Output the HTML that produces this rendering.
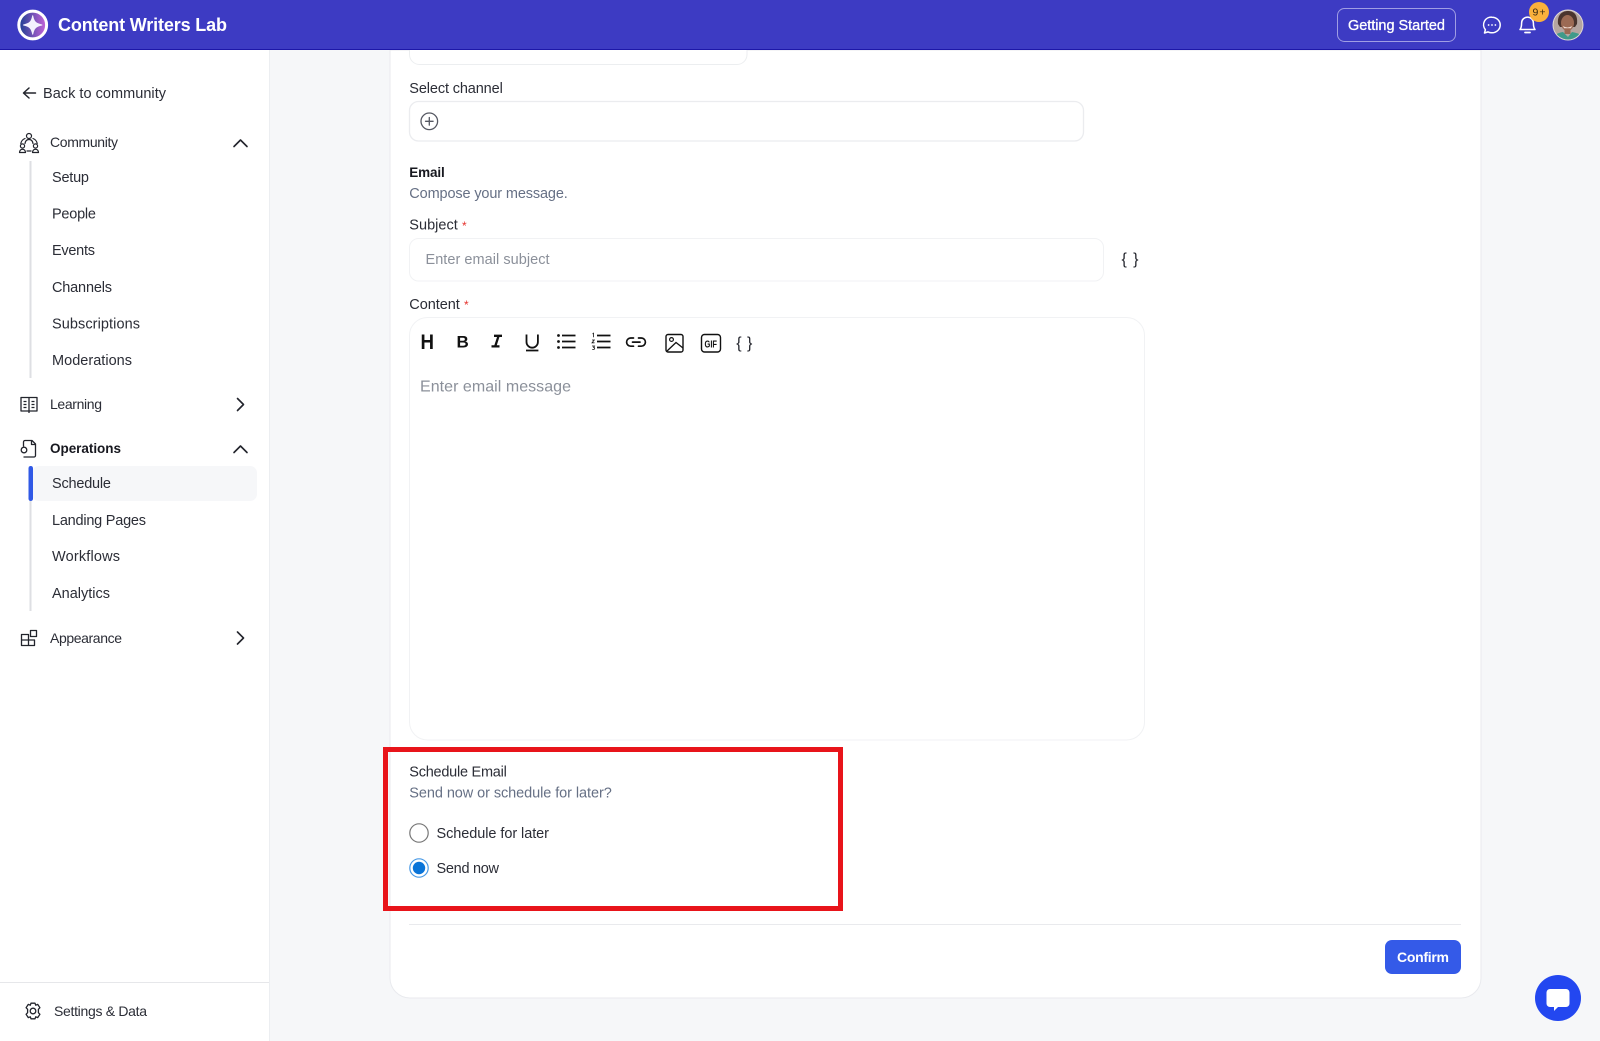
<!DOCTYPE html>
<html lang="en"><head><meta charset="utf-8"><title>Content Writers Lab</title>
<style>
html,body{margin:0;padding:0;width:1600px;height:1041px;overflow:hidden;background:#f6f7f9}
svg{display:block;position:absolute;left:0;top:0}
text{font-family:"Liberation Sans",sans-serif;font-size:14.5px;fill:#2b2d36}
.m{font-weight:700}
.g{fill:#667085}
.p{fill:#8b909a}
.i{fill:none;stroke:#22242c;stroke-width:1.4;stroke-linecap:round;stroke-linejoin:round}
.c{fill:none;stroke:#22242c;stroke-width:1.6;stroke-linecap:round;stroke-linejoin:round}
</style></head><body>
<svg width="1600" height="1041" viewBox="0 0 1600 1041" xmlns="http://www.w3.org/2000/svg">
<defs>
<linearGradient id="lg" x1="0" x2="1" y1="0" y2="0"><stop offset="0" stop-color="#1b3f92"/><stop offset="1" stop-color="#c864da"/></linearGradient>
<clipPath id="av"><circle cx="1568" cy="25" r="14.5"/></clipPath>
</defs>
<!-- sidebar -->
<rect x="0" y="50" width="269.5" height="991" fill="#fff"/>
<rect x="269" y="50" width="1" height="991" fill="#eceef1"/>
<rect x="0" y="982" width="269" height="1" fill="#e6e7ea"/>
<!-- card -->
<path d="M390 50V978a20 20 0 0 0 20 20H1461a20 20 0 0 0 20-20V50Z" fill="#fff" stroke="#e9eaee"/>
<!-- header -->
<rect x="0" y="0" width="1600" height="49.5" fill="#3d3bc3"/>
<rect x="0" y="49" width="1600" height="1" fill="#1d17a8"/>
<circle cx="32.7" cy="25" r="13.900" fill="url(#lg)" stroke="#fff" stroke-width="3"/>
<path d="M32.700 15.800C33.900 21.800 35.700 23.700 41.900 25C35.700 26.300 33.900 28.200 32.700 34.200C31.500 28.200 29.700 26.300 23.500 25C29.700 23.700 31.500 21.800 32.700 15.800Z" fill="#f3f0fd" stroke="#f3f0fd" stroke-width="1" stroke-linejoin="round"/>
<text x="58" y="31" textLength="169" lengthAdjust="spacing" class="m" style="font-size:18px;fill:#fff">Content Writers Lab</text>
<rect x="1337.5" y="8.5" width="118" height="33" rx="7" fill="none" stroke="#a09ee4"/>
<text x="1348" y="30" textLength="97" lengthAdjust="spacing" style="fill:#fff;font-size:14.500px;stroke:#fff;stroke-width:.3">Getting Started</text>
<path d="M1492 17.2a8 7.6 0 0 1 0 15.6c-1.4 0-2.7-.3-3.9-.9l-3.6 1.1.9-3.3a7.6 7.6 0 0 1 6.6-12.5Z" fill="none" stroke="#fff" stroke-width="1.5" stroke-linejoin="round"/>
<circle cx="1488.6" cy="25" r=".9" fill="#fff"/><circle cx="1492" cy="25" r=".9" fill="#fff"/><circle cx="1495.4" cy="25" r=".9" fill="#fff"/>
<path d="M1520 29.5c1.4-1.6 1.6-3.2 1.6-6.5a5.9 5.9 0 0 1 11.8 0c0 3.3.2 4.9 1.6 6.5Z" fill="none" stroke="#fff" stroke-width="1.5" stroke-linejoin="round"/>
<path d="M1525 32.5h5" stroke="#fff" stroke-width="1.8" stroke-linecap="round"/>
<circle cx="1539" cy="12" r="10" fill="#fbb13c"/>
<text x="1532.500" y="15.5" textLength="13" lengthAdjust="spacing" style="font-size:10.500px;fill:#3a2a10">9+</text>
<circle cx="1568" cy="25" r="15.5" fill="#e0d8d6"/>
<g clip-path="url(#av)">
<rect x="1552" y="9" width="32" height="32" fill="#b5a5a0"/>
<path d="M1558 24c-1-9 4-13 10-13s10 4 9 13l-2 3h-15Z" fill="#4a342e"/>
<ellipse cx="1567.500" cy="23" rx="6.500" ry="8" fill="#9c6a54"/>
<path d="M1563 26q4.500 3 9 0l-1 2.300h-7Z" fill="#f1dcd2"/>
<rect x="1564.500" y="29" width="6" height="5" fill="#9c6a54"/>
<path d="M1552 42V37q5-4 11-5l5 5 4-5q7 1 12 5v5Z" fill="#3f9a8a"/>
</g>
<!-- sidebar items -->
<path class="i" d="M29 88l-5.500 5 5.500 5M24 93h11.500" style="stroke-width:1.500"/>
<text x="43" y="98" textLength="123" lengthAdjust="spacing">Back to community</text>
<g class="i" style="stroke-width:1.200">
<circle cx="29" cy="136" r="2.500"/><path d="M25 143.500c.4-2.600 2-4 4-4s3.600 1.400 4 4"/>
<circle cx="22.500" cy="146" r="2.100"/><path d="M19.500 152.500c.2-2 1.300-3.200 3-3.200s2.800 1.200 3 3.200z"/>
<circle cx="35.500" cy="146" r="2.100"/><path d="M32.500 152.500c.2-2 1.300-3.200 3-3.200s2.800 1.200 3 3.200z"/>
<path d="M25 138.500c-2.500 1-3.800 2.800-4.200 5M33 138.500c2.500 1 3.800 2.800 4.200 5M27 151h4"/>
</g>
<text x="50" y="147" textLength="68" lengthAdjust="spacing" style="font-size:14px">Community</text>
<path class="c" d="M234 146.500l6.500-6.500 6.500 6.500"/>
<rect x="29.500" y="161" width="2" height="217" fill="#dedfe3"/>
<text x="52" y="182" textLength="37" lengthAdjust="spacing">Setup</text>
<text x="52" y="218.500" textLength="44" lengthAdjust="spacing">People</text>
<text x="52" y="255" textLength="43" lengthAdjust="spacing">Events</text>
<text x="52" y="292" textLength="60" lengthAdjust="spacing">Channels</text>
<text x="52" y="328.500" textLength="88" lengthAdjust="spacing">Subscriptions</text>
<text x="52" y="365" textLength="80" lengthAdjust="spacing">Moderations</text>
<path class="i" style="stroke-width:1.300;stroke-linecap:butt" d="M21 397.500h16v13.500h-16zM29 397.500v15.500M23.500 401.500h3M23.500 404.500h3M23.500 407.500h3M31.500 401.500h3M31.500 404.500h3M31.500 407.500h3"/>
<text x="50" y="409" textLength="52" lengthAdjust="spacing" style="font-size:14px">Learning</text>
<path class="c" d="M237.500 398.500l6 6-6 6"/>
<path class="i" style="stroke-width:1.300" d="M23.500 446v-4a1.500 1.500 0 0 1 1.500-1.500h7l3.500 3.500v11.500a1.500 1.500 0 0 1-1.500 1.500h-10M31.500 441v3.500h4"/>
<circle cx="24" cy="450" r="2.800" class="i" style="stroke-width:1.300"/>
<text x="50" y="453" textLength="71" lengthAdjust="spacing" class="m" style="font-size:13.500px;fill:#17181f">Operations</text>
<path class="c" d="M234 452.500l6.500-6.500 6.500 6.500"/>
<rect x="29.500" y="466" width="2" height="145" fill="#dedfe3"/>
<rect x="32" y="466" width="225" height="35" rx="7" fill="#f6f7f9"/>
<rect x="28.500" y="466" width="4.500" height="35" rx="2.200" fill="#3059e6"/>
<text x="52" y="488" textLength="59" lengthAdjust="spacing">Schedule</text>
<text x="52" y="525" textLength="94" lengthAdjust="spacing">Landing Pages</text>
<text x="52" y="561" textLength="68" lengthAdjust="spacing">Workflows</text>
<text x="52" y="598" textLength="58" lengthAdjust="spacing">Analytics</text>
<path class="i" style="stroke-width:1.300;stroke-linecap:butt" d="M21.500 634.500h7v11h-7zM28.500 640h6v5.500h-6zM21.500 640h7M30.500 630.500h6v6h-6z"/>
<text x="50" y="643" textLength="72" lengthAdjust="spacing" style="font-size:14px">Appearance</text>
<path class="c" d="M237.500 632l6 6-6 6"/>
<g class="i" style="stroke-width:1.300">
<circle cx="33" cy="1011" r="2.800"/>
<path d="M31 1003.200h4l.7 2 2-.8 2.200 3.300-1.500 1.600v3.400l1.500 1.600-2.200 3.300-2-.8-.7 2h-4l-.7-2-2 .8-2.200-3.300 1.500-1.600v-3.400l-1.500-1.600 2.200-3.300 2 .8z"/>
</g>
<text x="54" y="1016" textLength="93" lengthAdjust="spacing" style="font-size:14px">Settings &amp; Data</text>
<!-- form -->
<path d="M409.500 50v4.500a10 10 0 0 0 10 10H737a10 10 0 0 0 10-10V50" fill="#fff" stroke="#eceef0"/>
<text x="409.300" y="93" textLength="93.500" lengthAdjust="spacing">Select channel</text>
<rect x="409.500" y="101.500" width="674" height="39.500" rx="9" fill="#fff" stroke="#ebecef" stroke-width="1.300"/>
<circle cx="429.300" cy="121.300" r="8.300" fill="none" stroke="#555862" stroke-width="1.300"/>
<path d="M429.300 117.500v7.600M425.500 121.300h7.600" stroke="#555862" stroke-width="1.300" stroke-linecap="round"/>
<text x="409.300" y="177" textLength="35.500" lengthAdjust="spacing" class="m" style="fill:#17181f;font-size:13.500px">Email</text>
<text x="409.300" y="198" textLength="158.500" lengthAdjust="spacing" class="g">Compose your message.</text>
<text x="409.300" y="229.500" textLength="48.500" lengthAdjust="spacing">Subject</text>
<text x="462" y="230" style="fill:#e5322d;font-size:12px">*</text>
<rect x="409.500" y="238.500" width="694" height="42.500" rx="9" fill="#fff" stroke="#f1f2f4"/>
<text x="425.500" y="264" textLength="124" lengthAdjust="spacing" class="p">Enter email subject</text>
<text x="1121.500" y="264" textLength="17" lengthAdjust="spacing" style="font-size:16px;fill:#22242c">{ }</text>
<text x="409.300" y="309" textLength="50.500" lengthAdjust="spacing">Content</text>
<text x="464" y="309" style="fill:#e5322d;font-size:12px">*</text>
<rect x="409.500" y="317.500" width="735" height="422.500" rx="18" fill="#fff" stroke="#f1f2f4"/>
<!-- toolbar -->
<text x="420.500" y="349" textLength="13.500" lengthAdjust="spacingAndGlyphs" class="m" style="font-size:21px;fill:#111">H</text>
<text x="456.500" y="347.500" class="m" style="font-size:17px;fill:#111">B</text>
<path d="M494 335.800h8M491.500 346.400h8M498.600 335.800l-3.400 10.600" fill="none" stroke="#111" stroke-width="2.300"/>
<path d="M526.500 334.500v7.500a5.700 5.700 0 0 0 11.400 0v-7.500M526 350.500h12.400" fill="none" stroke="#111" stroke-width="1.800"/>
<path d="M562 335.500h13.500M562 341.500h13.500M562 347.500h13.500" stroke="#111" stroke-width="1.700"/>
<circle cx="558.500" cy="335.500" r="1.400" fill="#111"/><circle cx="558.500" cy="341.500" r="1.400" fill="#111"/><circle cx="558.500" cy="347.500" r="1.400" fill="#111"/>
<path d="M597 335.500h13.500M597 341.500h13.500M597 347.500h13.500" stroke="#111" stroke-width="1.700"/>
<path d="M592.500 334l1-.8v4M592 340h2.300l-2.300 2.800h2.500M592 346h2.500l-1 1.400c1 0 1.200.4 1.200 1s-.6 1-1.300 1h-1.200" fill="none" stroke="#111" stroke-width=".8"/>
<path d="M633.500 338h-2.800a4.100 4.100 0 0 0 0 8.200h2.800M638.500 338h2.800a4.100 4.100 0 0 1 0 8.200h-2.800M632.500 342.100h7.500" fill="none" stroke="#111" stroke-width="1.700" stroke-linecap="round"/>
<rect x="666" y="334.500" width="17" height="17.500" rx="2" fill="none" stroke="#111" stroke-width="1.400"/>
<circle cx="671.500" cy="339.500" r="1.900" fill="none" stroke="#111" stroke-width="1.200"/>
<path d="M666.500 351.500l9.500-9 7 5.500" fill="none" stroke="#111" stroke-width="1.300"/>
<rect x="701.500" y="334.500" width="19" height="17.500" rx="3" fill="none" stroke="#111" stroke-width="1.400"/>
<text x="704.500" y="347.500" textLength="12.500" lengthAdjust="spacingAndGlyphs" class="m" style="font-size:10.500px;fill:#111">GIF</text>
<text x="736.300" y="348" textLength="16" lengthAdjust="spacing" style="font-size:16px;fill:#22242c">{ }</text>
<text x="420" y="391.500" textLength="151" lengthAdjust="spacing" class="p" style="font-size:16px">Enter email message</text>
<!-- red box -->
<rect x="385.500" y="749.500" width="455" height="159" fill="none" stroke="#e8141a" stroke-width="5"/>
<text x="409.300" y="776.500" textLength="97.500" lengthAdjust="spacing">Schedule Email</text>
<text x="409.300" y="797.500" textLength="202.500" lengthAdjust="spacing" class="g">Send now or schedule for later?</text>
<circle cx="419" cy="833" r="9.200" fill="#fff" stroke="#777" stroke-width="1.200"/>
<text x="436.500" y="838" textLength="112.500" lengthAdjust="spacing">Schedule for later</text>
<circle cx="419" cy="868" r="9.200" fill="#fff" stroke="#4a9ae6" stroke-width="1.200"/>
<circle cx="419" cy="868" r="6.200" fill="#0a74d8"/>
<text x="436.500" y="873" textLength="62.500" lengthAdjust="spacing">Send now</text>
<rect x="409" y="924" width="1052" height="1" fill="#e9eaed"/>
<rect x="1385" y="940" width="76" height="34" rx="7" fill="#345ae8"/>
<text x="1397" y="962" textLength="52" lengthAdjust="spacing" class="m" style="fill:#fff;font-size:14px">Confirm</text>
<!-- chat -->
<circle cx="1558" cy="998" r="23" fill="#2347f0"/>
<path d="M1550 989h16a3.500 3.500 0 0 1 3.500 3.500v11a3.500 3.500 0 0 1-3.500 3.500h-8l-4 4v-4h-4a3.500 3.500 0 0 1-3.500-3.500v-11a3.500 3.500 0 0 1 3.500-3.500Z" fill="#fff"/>
</svg>
</body></html>
